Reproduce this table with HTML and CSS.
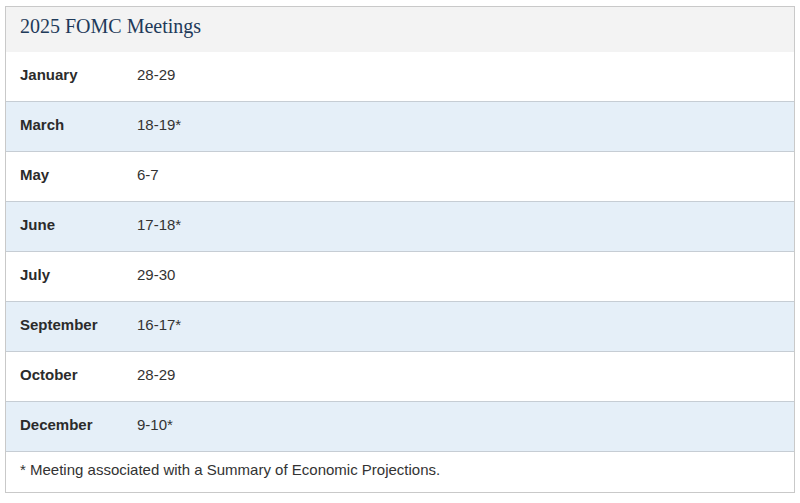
FILE: index.html
```html
<!DOCTYPE html>
<html>
<head>
<meta charset="utf-8">
<link rel="stylesheet" href="styles.css">
</head>
<body>
<div class="panel">
  <div class="panel-heading"><h4 class="title">2025 FOMC Meetings</h4></div>
  <div class="row"><div class="month">January</div><div class="date">28-29</div></div>
  <div class="row alt"><div class="month">March</div><div class="date">18-19*</div></div>
  <div class="row"><div class="month">May</div><div class="date">6-7</div></div>
  <div class="row alt"><div class="month">June</div><div class="date">17-18*</div></div>
  <div class="row"><div class="month">July</div><div class="date">29-30</div></div>
  <div class="row alt"><div class="month">September</div><div class="date">16-17*</div></div>
  <div class="row"><div class="month">October</div><div class="date">28-29</div></div>
  <div class="row alt"><div class="month">December</div><div class="date">9-10*</div></div>
  <div class="panel-footer">* Meeting associated with a Summary of Economic Projections.</div>
</div>
</body>
</html>
```
FILE: styles.css
```css
html, body {
  margin: 0;
  padding: 0;
  background: #ffffff;
}
body {
  padding: 6px 5px 0 5px;
  font-family: "Liberation Sans", Arial, sans-serif;
  color: #333333;
}
.panel {
  width: 788px;
  border: 1px solid #c9c9c9;
  background: #ffffff;
}
.panel-heading {
  height: 45px;
  background: #f3f3f3;
  display: flex;
  align-items: center;
  padding-left: 14px;
}
.title {
  margin: 0;
  font-family: "Liberation Serif", "Times New Roman", serif;
  font-weight: normal;
  font-size: 20px;
  line-height: 24px;
  color: #1e3a5a;
  position: relative;
  top: -4px;
}
.row {
  display: flex;
  align-items: center;
  height: 49px;
  box-sizing: border-box;
  height: 50px;
  padding-bottom: 3px;
  border-bottom: 1px solid #c6cdd4;
  padding-left: 14px;
  font-size: 15px;
  line-height: 18px;
}
.row.alt {
  background: #e5eff8;
}
.month {
  width: 117px;
  font-weight: bold;
  color: #2b2b2b;
}
.date {
  color: #333333;
}
.panel-footer {
  height: 40px;
  box-sizing: border-box;
  padding-bottom: 4px;
  display: flex;
  align-items: center;
  padding-left: 14px;
  font-size: 15px;
  line-height: 18px;
  color: #333333;
}
```
